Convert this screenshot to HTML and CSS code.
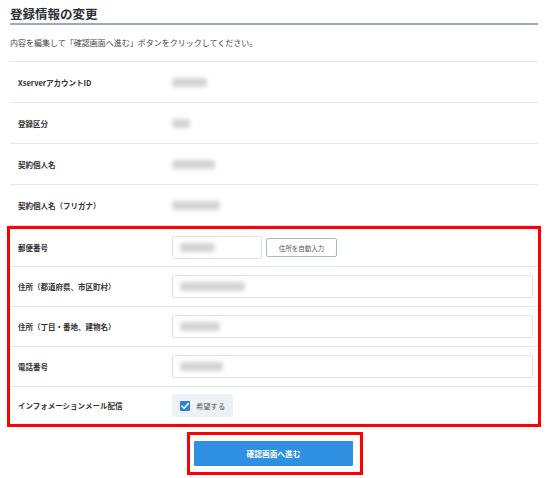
FILE: index.html
```html
<!DOCTYPE html>
<html lang="ja">
<head>
<meta charset="utf-8">
<title>登録情報の変更</title>
<link rel="stylesheet" href="styles.css">
</head>
<body>
<div class="page">
  <h1 class="title">登録情報の変更</h1>
  <p class="desc">内容を編集して「確認画面へ進む」ボタンをクリックしてください。</p>

  <div class="row">
    <div class="label">XserverアカウントID</div>
    <div class="value"><span class="blur b35"></span></div>
  </div>
  <div class="row">
    <div class="label">登録区分</div>
    <div class="value"><span class="blur b18"></span></div>
  </div>
  <div class="row">
    <div class="label">契約個人名</div>
    <div class="value"><span class="blur b43"></span></div>
  </div>
  <div class="row">
    <div class="label">契約個人名（フリガナ）</div>
    <div class="value"><span class="blur b48"></span></div>
  </div>

  <div class="mark form">
    <div class="row frow">
      <div class="label">郵便番号</div>
      <div class="value">
        <div class="input short"><span class="blur b35"></span></div>
        <button class="auto" type="button">住所を自動入力</button>
      </div>
    </div>
    <div class="row frow">
      <div class="label">住所（都道府県、市区町村）</div>
      <div class="value"><div class="input wide"><span class="blur b65"></span></div></div>
    </div>
    <div class="row frow">
      <div class="label">住所（丁目・番地、建物名）</div>
      <div class="value"><div class="input wide"><span class="blur b40"></span></div></div>
    </div>
    <div class="row frow">
      <div class="label">電話番号</div>
      <div class="value"><div class="input wide"><span class="blur b43"></span></div></div>
    </div>
    <div class="row frow last">
      <div class="label">インフォメーションメール配信</div>
      <div class="value">
        <label class="check">
          <svg class="box" width="10" height="10" viewBox="0 0 10 10"><rect width="10" height="10" rx="1" fill="#2f80d6"/><path d="M2 5.2 L4.1 7.3 L8.2 2.6" fill="none" stroke="#fff" stroke-width="1.6" stroke-linecap="round" stroke-linejoin="round"/></svg>
          <span>希望する</span>
        </label>
      </div>
    </div>
  </div>

  <div class="actions">
    <div class="mark submitwrap">
      <button class="submit" type="button">確認画面へ進む</button>
    </div>
  </div>
</div>
</body>
</html>
```
FILE: styles.css
```css
* { box-sizing: border-box; }
html, body { margin: 0; padding: 0; background: #fff; }
body {
  font-family: "Noto Sans CJK JP", "Noto Sans", sans-serif;
  color: #333;
}
.page {
  width: 528px;
  margin-left: 10px;
}
.title {
  margin: 0;
  padding: 6px 0 1px;
  font-size: 12.5px;
  line-height: 16px;
  font-weight: 700;
  color: #2f3338;
  border-bottom: 2px solid #98acbe;
}
.desc {
  margin: 0;
  padding: 12px 0 12px;
  font-size: 8px;
  line-height: 12px;
  color: #444;
  border-bottom: 1px solid #e3e9ef;
}
.row {
  display: grid;
  grid-template-columns: 162px 1fr;
  align-items: center;
  height: 41px;
  border-bottom: 1px solid #e3e9ef;
}
.label {
  padding-left: 8px;
  font-size: 7.5px;
  font-weight: 700;
  color: #333;
  white-space: nowrap;
}
.value {
  display: flex;
  align-items: center;
  gap: 4px;
  padding-right: 5px;
}
.blur {
  display: inline-block;
  height: 9px;
  background: #d3d3d3;
  border-radius: 3px;
  filter: blur(2.2px);
}
.b18 { width: 18px; }
.b35 { width: 35px; }
.b40 { width: 40px; }
.b43 { width: 43px; }
.b48 { width: 48px; }
.b65 { width: 65px; }

.mark {
  border: 3px solid #ff0000;
}
.form {
  margin: 0 -3px;
  padding: 0;
}
.frow { height: 40px; }
.frow:first-child { height: 38px; }
.frow.last { border-bottom: none; height: 37px; }
.input {
  height: 23px;
  border: 1px solid #dde4ec;
  border-radius: 2px;
  display: flex;
  align-items: center;
  padding-left: 7px;
  background: #fff;
}
.short { width: 90px; }
.wide { flex: 1; }
.auto {
  width: 71px;
  height: 19px;
  border: 1px solid #aab8c6;
  border-radius: 2px;
  background: #fff;
  font-family: inherit;
  font-size: 6.5px;
  color: #555;
  padding: 0;
}
.check {
  display: flex;
  align-items: center;
  gap: 6px;
  width: 61px;
  height: 23px;
  padding-left: 8px;
  background: #edf1f5;
  border-radius: 2px;
  font-size: 7.3px;
  color: #555;
}
.box { flex: none; }
.actions {
  display: flex;
  justify-content: center;
  padding-top: 5px;
}
.submitwrap {
  width: 176px;
  height: 43px;
  padding: 6px 7px 6px 4px;
  margin-left: 2px;
}
.submit {
  display: block;
  width: 159px;
  height: 25px;
  border: none;
  border-radius: 1px;
  background: #2f8fe1;
  color: #fff;
  font-family: inherit;
  font-size: 7.7px;
  font-weight: 700;
  padding: 0;
}
```
